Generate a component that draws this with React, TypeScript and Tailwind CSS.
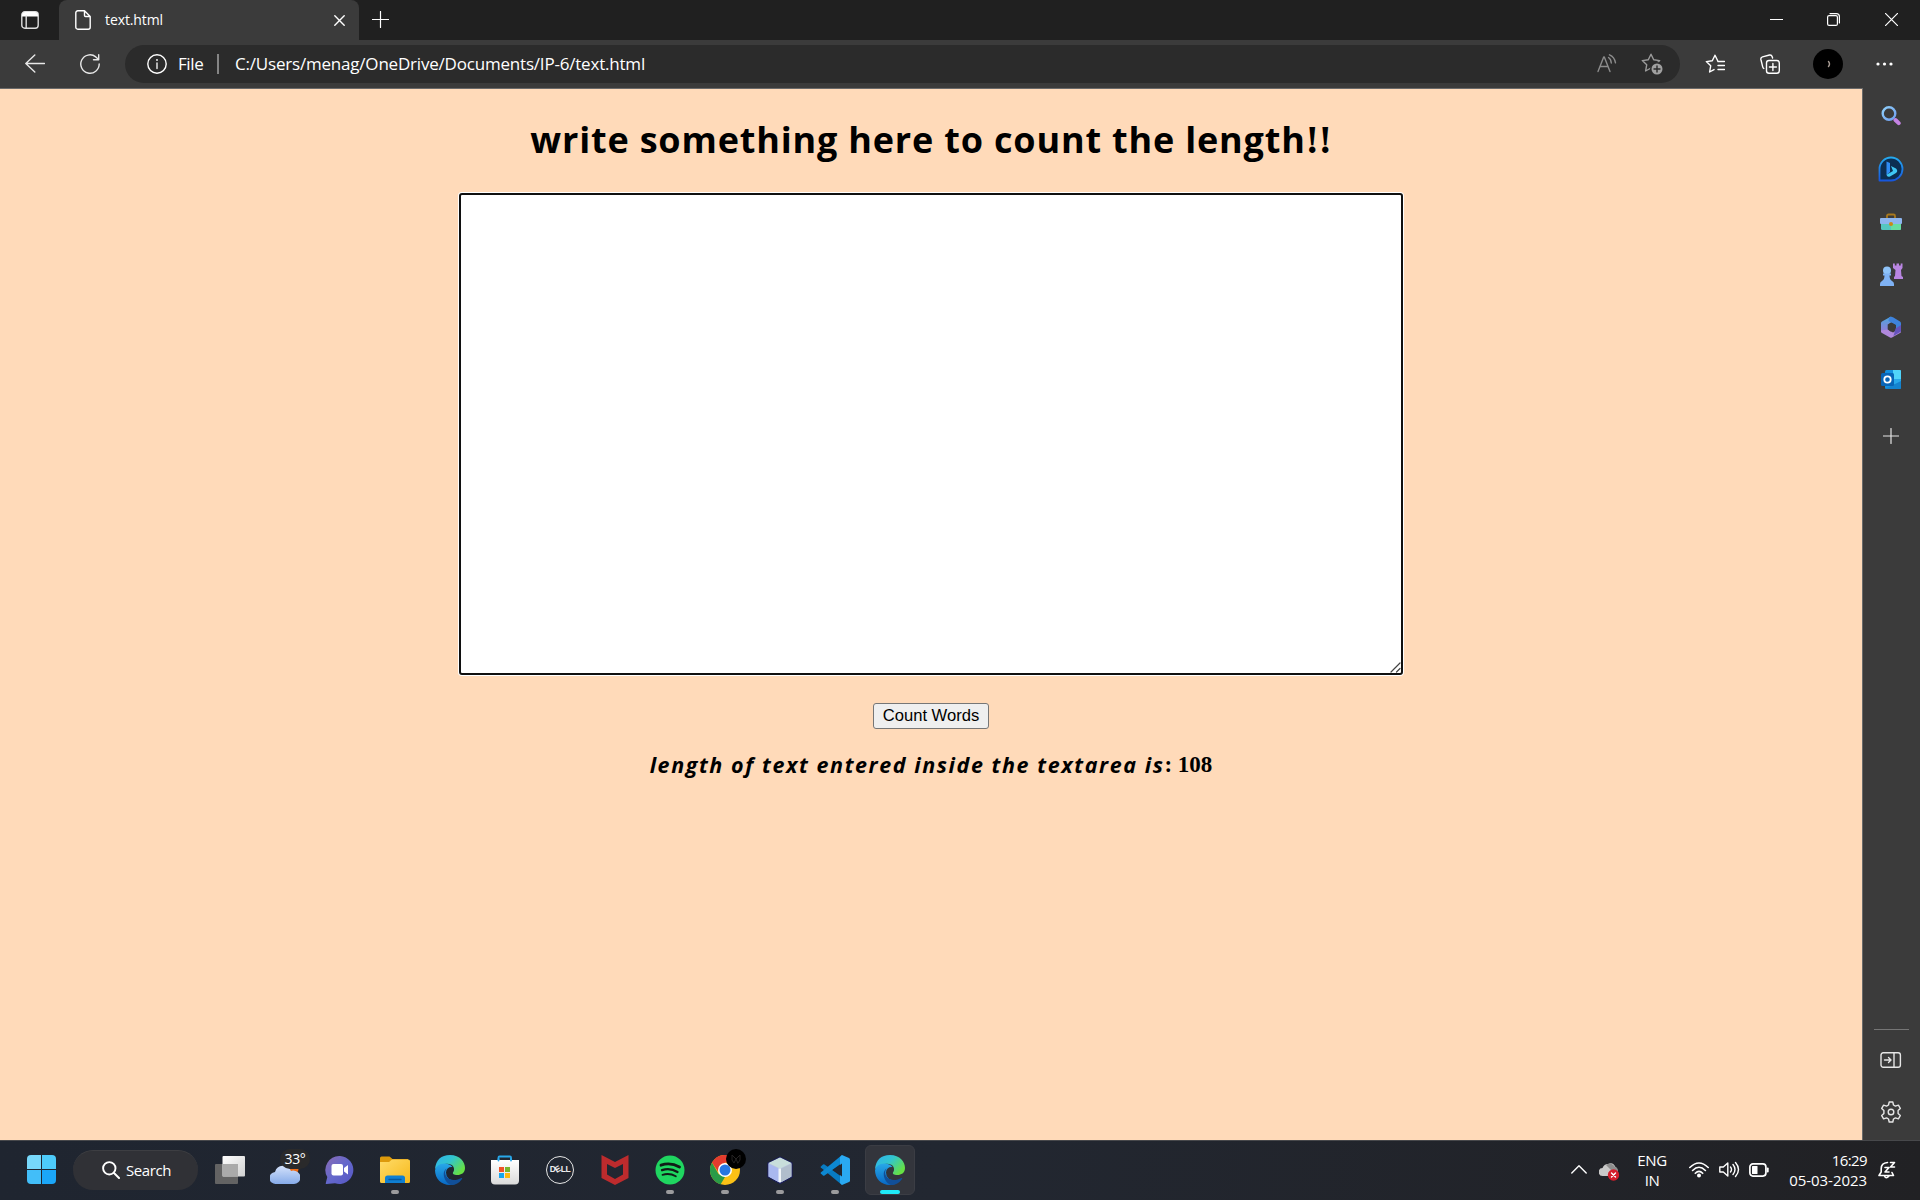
import React from "react";

const ui = "font-['Open_Sans','Noto_Sans',sans-serif]";

type IconProps = { children: React.ReactNode; w?: number; h?: number; className?: string };

function Svg({ children, w = 20, h = 20, className = "" }: IconProps) {
  return (
    <svg
      width={w}
      height={h}
      viewBox={`0 0 ${w} ${h}`}
      fill="none"
      stroke="currentColor"
      strokeWidth="1.4"
      strokeLinecap="round"
      strokeLinejoin="round"
      className={`block shrink-0 ${className}`}
    >
      {children}
    </svg>
  );
}

function TitleBar() {
  return (
    <div className="flex h-10 bg-[#202020] text-white">
      <div className="flex w-[59px] shrink-0 items-center rounded-br-lg pl-[21px]">
        <Svg w={18} h={18}>
          <rect x="0.8" y="0.8" width="16.4" height="16.4" rx="3" stroke="#ddd" />
          <path d="M1 4a3 3 0 0 1 3-3h10a3 3 0 0 1 3 3v1.5H1z" fill="#fff" stroke="none" />
          <path d="M5.2 5v12" stroke="#ddd" />
        </Svg>
      </div>
      <div className="flex w-[300px] shrink-0 items-center rounded-t-lg bg-[#3b3b3b] pl-4">
        <Svg w={16} h={20}>
          <path d="M3 .8h6.5L15.2 6.500V17.200a2 2 0 0 1-2 2H2.800a2 2 0 0 1-2-2V2.800a2 2 0 0 1 2-2zM9.500 1v4.500a1 1 0 0 0 1 1H15" />
        </Svg>
        <span className={`${ui} ml-[14px] w-[229px] text-[14px] leading-5 tracking-[-0.1px]`}>text.html</span>
        <Svg w={11} h={11} className="mt-px">
          <path d="M.8.8l9.400 9.400M10.200.8L.8 10.200" />
        </Svg>
      </div>
      <div className="flex flex-1 items-center pl-[13px]">
        <Svg w={17} h={17} className="-mt-px">
          <path d="M8.500 .5v16M.5 8.500h16" strokeWidth="1.200" />
        </Svg>
      </div>
      <div className="flex items-center pr-[22px]">
        <Svg w={13} h={13} className="mr-11 -mt-px">
          <path d="M0 6.500h13" strokeWidth="1" />
        </Svg>
        <Svg w={13} h={13} className="mr-[45px] -mt-px">
          <rect x=".6" y="2.600" width="9.800" height="9.800" rx="1.500" strokeWidth="1.200" />
          <path d="M3 .6h6.400a3 3 0 0 1 3 3V10" strokeWidth="1.200" />
        </Svg>
        <Svg w={13} h={13} className="-mt-px">
          <path d="M.4.4l12.200 12.200M12.600.4L.4 12.600" strokeWidth="1.200" />
        </Svg>
      </div>
    </div>
  );
}

const STAR = "M10 1.200l2.700 5.600 6 .8-4.400 4.200 1.100 6.200L10 15l-5.400 3 1.100-6.200L1.300 7.600l6-.8z";

function Toolbar() {
  return (
    <div className="flex h-12 items-center bg-[#3b3b3b] text-white">
      <Svg className="ml-[25px]">
        <path d="M19.500 9.500H.8M9.800 1L.8 9.500l9 8.500" stroke="#e8e8e8" />
      </Svg>
      <Svg className="ml-[35px]">
        <path d="M19.200 10A9.200 9.200 0 1 1 15.800 2.900L18.700 5.600M18.700.8v5h-5.200" stroke="#e8e8e8" />
      </Svg>
      <div className="ml-[25px] flex h-[38px] w-[1555px] items-center rounded-full bg-[#2b2b2b] pl-[22px]">
        <Svg>
          <circle cx="10" cy="10" r="9.200" />
          <path d="M10 9v5.500" strokeWidth="1.300" />
          <circle cx="10" cy="6" r=".9" fill="currentColor" stroke="none" />
        </Svg>
        <span className={`${ui} ml-[11px] w-[39px] text-[17px] leading-6 tracking-[-0.4px]`}>File</span>
        <div className="h-5 w-0.5 bg-[#858585]" />
        <span className={`${ui} ml-4 flex-1 text-[17px] leading-6 tracking-[-0.2px]`}>
          C:/Users/menag/OneDrive/Documents/IP-6/text.html
        </span>
        <Svg className="mr-6 text-[#8c8c8c]">
          <path d="M1 17.500L6.700 3h.6L13 17.500M3 12.500h8M11.500 3.500q2.500 1.500 2.800 5.500M12.500 .8q5 2 6 8" />
        </Svg>
        <Svg w={22} h={22} className="mr-[17px] text-[#9b9b9b]">
          <path d={STAR} />
          <circle cx="16" cy="16" r="7" fill="#2b2b2b" stroke="none" />
          <circle cx="16" cy="16" r="5.500" fill="#a0a0a0" stroke="none" />
          <path d="M16 13v6M13 16h6" stroke="#2b2b2b" />
        </Svg>
      </div>
      <Svg className="ml-[25px]">
        <path d="M12.800 7L10 1.200 7.300 6.800l-6 .8 4.400 4.200-1.100 6.200L9 15.600M12.800 7.500h6.700M13 11.500h6.500M13 15.500h6.500" />
      </Svg>
      <Svg className="ml-[35px]">
        <rect x="6.500" y="6.500" width="12.800" height="12.800" rx="2.500" />
        <path d="M12.900 9.500v7M9.400 13h7M3.800 14.500Q3 14 2.700 12.800L.9 5.500Q.5 3.500 2.500 2.900L9.500 1q2-.4 2.600 1.500l.5 1.500" />
      </Svg>
      <div className="ml-[33px] flex size-[30px] items-center justify-center rounded-full bg-black">
        <Svg w={6} h={8}>
          <path d="M3.500 1.500q2 2.500 0 5" stroke="#a89c94" />
        </Svg>
      </div>
      <Svg w={18} h={4} className="ml-[33px]">
        <g fill="#fff" stroke="none">
          <circle cx="2" cy="2" r="1.600" />
          <circle cx="8.500" cy="2" r="1.600" />
          <circle cx="15" cy="2" r="1.600" />
        </g>
      </Svg>
    </div>
  );
}

function Sidebar() {
  const cell = "flex h-[53px] w-full items-center justify-center";
  return (
    <div className="flex w-[58px] shrink-0 flex-col items-center border-l border-[#6a6a6a] bg-[#3b3b3b] pt-px pr-px text-[#e6e6e6]">
      <div className={cell}>
        <Svg>
          <defs>
            <linearGradient id="lens" x1="0" y1="0" x2="1" y2="1">
              <stop stopColor="#8fd0fa" />
              <stop offset="1" stopColor="#6f9df0" />
            </linearGradient>
          </defs>
          <circle cx="8" cy="7.500" r="6.300" stroke="url(#lens)" strokeWidth="2.400" />
          <path d="M14.500 14l3.200 3.200" stroke="#c583e4" strokeWidth="4" />
        </Svg>
      </div>
      <div className={cell}>
        <Svg w={26} h={26}>
          <defs>
            <linearGradient id="bing" x1="0" y1="0" x2="0" y2="1">
              <stop stopColor="#25a9ee" />
              <stop offset="1" stopColor="#1757dd" />
            </linearGradient>
          </defs>
          <path d="M1.500 24.500V13A11.500 11.500 0 1 1 13 24.500z" fill="#0c2f52" stroke="url(#bing)" strokeWidth="1.800" />
          <path d="M8.500 5.500l3.500 1.500v9l-3.500 3z" fill="#2f8cf4" stroke="none" />
          <path d="M13 10l5 2.500q2.500 2.500 0 4.500l-6 3.500q-3 .8-3.500-1.800l6.500-3.700z" fill="#3fc8f4" stroke="none" />
        </Svg>
      </div>
      <div className={cell}>
        <Svg w={22} h={18}>
          <path d="M7 5V3q0-1.500 1.500-1.500h5Q15 1.500 15 3v2" stroke="#a8781c" strokeWidth="1.800" />
          <path d="M1 9h20v6.500a1.500 1.500 0 0 1-1.500 1.500h-17A1.500 1.500 0 0 1 1 15.500z" fill="#54c7c0" stroke="none" />
          <path d="M11 10h10v5.500a1.500 1.500 0 0 1-1.500 1.500H11z" fill="#67dda2" stroke="none" />
          <rect x="0" y="5" width="22" height="6" rx="1" fill="#8db5ef" stroke="none" />
          <circle cx="11" cy="11" r="2" fill="#c98a17" stroke="none" />
        </Svg>
      </div>
      <div className={cell}>
        <Svg w={24} h={24}>
          <g stroke="none">
            <path d="M14 .5h1.800v2h1.700v-2h2.500v2h1.700v-2H23.500v4.500l-1.500 2 .5 6 1.500 1v2h-9v-2l1-1 .5-6-2.500-2z" fill="#b986e2" />
            <circle cx="8" cy="7.500" r="4" fill="#8fc3f8" />
            <path d="M4 10.500h8v2h-1.500q0 4 2.500 5.500 2 1 2 3V23H1v-2q0-2 2-3 2.500-1.500 2.500-5.500H4z" fill="#7fb2f4" />
          </g>
        </Svg>
      </div>
      <div className={`${cell} -mt-px`}>
        <Svg w={22} h={22}>
          <defs>
            <linearGradient id="officeLeft" x1="0" y1="0" x2="0" y2="1">
              <stop stopColor="#4aa8dc" />
              <stop offset="1" stopColor="#9a78d8" />
            </linearGradient>
          </defs>
          <g stroke="none">
            <path d="M11 .5L2 5.500Q1 6 1 7v8l4 2 4-2V8l5-3z" fill="url(#officeLeft)" />
            <path d="M9 1.200q2-1 4 0l7 4.300q1 .5 1 2V15l-5 1.500V9L8.500 5z" fill="#3e83dd" />
            <path d="M1 14.500l7-1 5 3 8-5v4q0 1-1 1.500l-8 4.500q-1 .5-2 0l-8-4.500q-1-.5-1-1.500z" fill="#b088dc" />
            <path d="M15.500 12.500L21 9v6.500l-7.500 4.500z" fill="#6553bc" />
            <path d="M11 6.500l4 2.300v4.500l-4 2.500-3.300-2.300V8.500z" fill="#3b3b3b" />
          </g>
        </Svg>
      </div>
      <div className={cell}>
        <Svg w={22} h={20}>
          <g stroke="none">
            <rect x="5" y="0" width="16" height="19" rx="1.500" fill="#1490df" />
            <path d="M13 0h7q1 0 1 1v8h-8z" fill="#50d4fa" />
            <path d="M12 9h9v8L12 13z" fill="#28a8ea" />
            <path d="M5 19l16-8v7q0 1-1.500 1z" fill="#1483cf" />
            <rect x="1" y="3" width="13" height="13" rx="1.500" fill="#0865b7" />
          </g>
          <circle cx="7.500" cy="9.500" r="3.200" stroke="#fff" strokeWidth="1.800" />
        </Svg>
      </div>
      <div className="flex h-[60px] w-full items-center justify-center">
        <Svg w={16} h={16}>
          <path d="M8 .5v15M.5 8h15" strokeWidth="1.200" />
        </Svg>
      </div>
      <div className="flex-1" />
      <div className="h-px w-[35px] bg-[#757575]" />
      <div className="mt-[3px] flex h-[53px] items-center">
        <Svg w={22} h={16}>
          <rect x="1" y=".8" width="19.400" height="14.400" rx="2.200" />
          <path d="M14 1v14M4.500 8h6M8.500 5.500L11 8l-2.500 2.500" />
        </Svg>
      </div>
      <div className="mb-[2px] flex h-[52px] items-center">
        <Svg w={22} h={22}>
          <circle cx="11" cy="11" r="2.800" />
          <path d="M9.200 1h3.600l.7 3 1.900 1.100 3-.9 1.900 3.200-2.200 2.200v2.800l2.200 2.200-1.900 3.200-3-.9-1.900 1.100-.7 3H9.200l-.7-3-1.900-1.100-3 .9-1.900-3.200 2.200-2.200V9.600L1.700 7.400l1.900-3.200 3 .9L8.500 4z" />
        </Svg>
      </div>
    </div>
  );
}

function Page() {
  return (
    <main className="flex w-[1862px] shrink-0 flex-col items-center bg-[#ffdab9] text-black">
      <h1 className="mt-[27px] flex h-12 items-center whitespace-nowrap">
        <span className="font-['Open_Sans',sans-serif] text-[36px] leading-[48px] font-bold tracking-[0.820px]">
          write something here to count the length
        </span>
        <span className="font-['Liberation_Serif',serif] text-[39px] leading-[48px] font-bold">!!</span>
      </h1>
      <div className="mt-[29px] flex h-[482px] w-[944px] items-end justify-end rounded-[3px] border-2 border-[#101010] bg-white shadow-[0_0_0_1px_#fff]">
        <Svg w={11} h={11}>
          <path d="M1 10L10 1M6.500 10L10 6.500" stroke="#444" strokeWidth="1.200" />
        </Svg>
      </div>
      <button className="mt-7 h-[26px] w-[116px] rounded-[3px] border border-[#767676] bg-[#efefef] font-['Liberation_Sans',sans-serif] text-[16.600px] leading-6 whitespace-nowrap">
        Count Words
      </button>
      <p className="mt-5 flex h-8 items-center whitespace-pre">
        <span className="font-['Open_Sans',sans-serif] text-[21.500px] leading-8 font-bold tracking-[1.580px] italic">
          length of text entered inside the textarea is
        </span>
        <span className="font-['Liberation_Serif',serif] text-[23px] leading-8 font-bold">: 108</span>
      </p>
    </main>
  );
}

function EdgeLogo({ id }: { id: string }) {
  return (
    <Svg w={30} h={30}>
      <defs>
        <linearGradient id={`${id}top`} x1="0" y1="0" x2="1" y2=".6">
          <stop stopColor="#2fb2ec" />
          <stop offset=".5" stopColor="#32c5cf" />
          <stop offset="1" stopColor="#66e044" />
        </linearGradient>
        <linearGradient id={`${id}side`} x1="0" y1="0" x2="0" y2="1">
          <stop stopColor="#28a8e8" />
          <stop offset="1" stopColor="#0868c4" />
        </linearGradient>
      </defs>
      <g stroke="none">
        <path d="M0 14Q1.500 0 15 0c10 0 15 7 15 13 0 5-4 7-7.500 7-4 0-5-1.300-4.500-2.500 2.500-3 .5-8-4-8.500Q7 8 0 14z" fill={`url(#${id}top)`} />
        <path d="M0 15Q2 8.500 9 8.500q6 0 8.500 3.500-6-.5-6.500 5.500 0 9 13 8-4 4.500-9 4.500C6 30 0 23.500 0 15z" fill={`url(#${id}side)`} />
        <path d="M11.500 13.500Q9 17 11 21c3 5 10 5 15.500 2q1.200-.3.500 1-4 6-11 6C9.500 28 6 17 11.500 13.500z" fill="#114f98" />
      </g>
    </Svg>
  );
}

function Slot({ children, dot, active }: { children: React.ReactNode; dot?: boolean; active?: boolean }) {
  return (
    <div
      className={`relative mx-[2.5px] flex h-[50px] w-[50px] shrink-0 items-center justify-center rounded-md ${
        active ? "border border-[#3b3d44] bg-[#33353c]" : ""
      }`}
    >
      {children}
      {dot && <div className="absolute bottom-px left-[21px] h-1 w-2 rounded-full bg-[#9b9b9d]" />}
      {active && <div className="absolute bottom-0 left-[14px] h-1 w-5 rounded-full bg-[#1feaf8]" />}
    </div>
  );
}

function Taskbar() {
  return (
    <div className="flex h-[60px] items-center border-t border-[#47484b] bg-linear-to-r from-[#1f2530] via-[#222731] to-[#212124] pb-[2px] text-white">
      <div className="ml-[27px] grid size-[29px] grid-cols-2 gap-px">
        <div className="rounded-tl-sm bg-[#77d8fb]" />
        <div className="rounded-tr-sm bg-[#4dcbfa]" />
        <div className="rounded-bl-sm bg-[#42bef9]" />
        <div className="rounded-br-sm bg-[#1ba6f8]" />
      </div>
      <div className="ml-[17px] flex h-10 w-[125px] items-center rounded-full border-t border-[#3d3e42] bg-[#303136] pl-[29px]">
        <Svg w={18} h={18}>
          <circle cx="7.300" cy="7.300" r="6.200" strokeWidth="1.900" />
          <path d="M12 12l5 5" strokeWidth="2" />
        </Svg>
        <span className={`${ui} ml-[6px] text-[15px] leading-5 tracking-[-0.4px]`}>Search</span>
      </div>
      <div className="ml-[4.500px] flex">
        <Slot>
          <Svg w={30} h={28}>
            <defs>
              <linearGradient id="pane" x1="0" y1="0" x2="1" y2="1">
                <stop stopColor="#fff" />
                <stop offset="1" stopColor="#d0d0d0" />
              </linearGradient>
            </defs>
            <g stroke="none">
              <rect x="0" y="8" width="23" height="20" rx="1" fill="#636363" />
              <rect x="7.500" y="0" width="22.500" height="20.500" rx="1" fill="url(#pane)" />
              <path d="M7.500 8H23v12.500H7.500z" fill="#aaa" />
            </g>
          </Svg>
        </Slot>
        <Slot>
          <Svg w={30} h={30}>
            <defs>
              <linearGradient id="cloud" x1="0" y1="0" x2="0" y2="1">
                <stop stopColor="#d3e1fb" />
                <stop offset="1" stopColor="#86abe9" />
              </linearGradient>
            </defs>
            <g stroke="none">
              <circle cx="23" cy="14" r="5.500" fill="#ee6b16" />
              <path d="M6 29a6 6 0 0 1-1-12 8.500 8.500 0 0 1 16-1q2-1 4.500 0a6.600 6.600 0 0 1-1.500 13z" fill="url(#cloud)" />
            </g>
          </Svg>
          <span className={`${ui} absolute top-[4px] left-[20px] flex h-5 w-[30px] items-center justify-center rounded-full bg-[#2a2a2b] text-[14px] tracking-[-0.300px]`}>
            33°
          </span>
        </Slot>
        <Slot>
          <Svg w={30} h={30}>
            <defs>
              <linearGradient id="chat" x1="0" y1="0" x2="1" y2="1">
                <stop stopColor="#8a6bb4" />
                <stop offset=".5" stopColor="#6468cc" />
                <stop offset="1" stopColor="#5556c4" />
              </linearGradient>
            </defs>
            <g stroke="none">
              <path d="M15 1a14 14 0 1 1-5 27.300L1.500 29q-1 0-.7-1l1.500-6A14 14 0 0 1 15 1z" fill="url(#chat)" />
              <rect x="6.500" y="9" width="11.500" height="11.500" rx="2" fill="#fff" />
              <path d="M19 13l4-3v9.500l-4-3z" fill="#fff" />
            </g>
          </Svg>
        </Slot>
        <Slot dot>
          <Svg w={30} h={28}>
            <defs>
              <linearGradient id="folder" x1="0" y1="0" x2="1" y2="1">
                <stop stopColor="#ffdb68" />
                <stop offset="1" stopColor="#f6b91b" />
              </linearGradient>
            </defs>
            <g stroke="none">
              <path d="M0 2q0-1.500 1.500-1.500h8L12.500 3H28v5H0z" fill="#dd9a0b" />
              <path d="M0 6h9l3-2.500h16.500Q30 3.500 30 5v20.500q0 1.500-1.500 1.500h-27Q0 27 0 25.500z" fill="url(#folder)" />
              <path d="M5 27v-5q0-2.500 2.500-2.500h15Q25 19.500 25 22v5z" fill="#0f7fd2" />
            </g>
            <path d="M9 23.500h12" stroke="#07589e" />
          </Svg>
        </Slot>
        <Slot>
          <EdgeLogo id="e1" />
        </Slot>
        <Slot>
          <Svg w={30} h={30}>
            <defs>
              <linearGradient id="bag" x1="0" y1="0" x2="0" y2="1">
                <stop stopColor="#fff" />
                <stop offset="1" stopColor="#dadada" />
              </linearGradient>
            </defs>
            <path d="M8.500 6V2.500q0-1 1-1h10.500q1 0 1 1V6" stroke="#28a8ea" strokeWidth="1.800" />
            <g stroke="none">
              <path d="M1 5h28v20.500q0 4-4 4H5q-4 0-4-4z" fill="url(#bag)" />
              <rect x="9" y="12" width="5" height="5" fill="#ef5328" />
              <rect x="15" y="12" width="5" height="5" fill="#78b52d" />
              <rect x="9" y="18" width="5" height="5" fill="#16a6ee" />
              <rect x="15" y="18" width="5" height="5" fill="#fdb910" />
            </g>
            <path d="M8.500 5.500V4M21 5.500V4" stroke="#28a8ea" strokeWidth="1.800" />
          </Svg>
        </Slot>
        <Slot>
          <div className="flex size-7 items-center justify-center rounded-full border-[1.500px] border-[#e6e6e6] font-['Liberation_Sans',sans-serif] text-[8.500px] leading-none font-bold tracking-[-0.400px] text-[#ececec]">
            D<span className="-rotate-[30deg]">E</span>LL
          </div>
        </Slot>
        <Slot>
          <Svg w={28} h={30}>
            <path d="M.5 0L14 7 27.500 0v23L14 30 .5 23zM6 9v10.500L14 24l8-4.500V9l-8 4z" fill="#bd2b2d" fillRule="evenodd" stroke="none" />
          </Svg>
        </Slot>
        <Slot dot>
          <Svg w={30} h={30}>
            <circle cx="15" cy="15" r="14.500" fill="#1fd660" stroke="none" />
            <g stroke="#111b17">
              <path d="M6 10.200Q15.500 7 24.500 12" strokeWidth="2.800" />
              <path d="M7 15.200Q15 12.500 22.500 17" strokeWidth="2.300" />
              <path d="M7.500 19.800Q14.500 17.600 20.800 21.300" strokeWidth="1.900" />
            </g>
          </Svg>
        </Slot>
        <Slot dot>
          <Svg w={30} h={30}>
            <g stroke="none">
              <circle cx="15" cy="15" r="15" fill="#fbc116" />
              <path d="M2 7.500L8.500 19 15 22l-4.500 7.400A15 15 0 0 1 2 7.500z" fill="#2a9b47" />
              <path d="M2 7.500A15 15 0 0 1 28 7.500H15l-7 9z" fill="#e33b2e" />
              <circle cx="15" cy="15" r="7" fill="#fff" />
              <circle cx="15" cy="15" r="5.500" fill="#2877e2" />
            </g>
          </Svg>
          <div className="absolute top-[4px] left-[26px] flex size-5 items-center justify-center rounded-full bg-black text-[#252323]">
            <Svg w={12} h={10}>
              <path d="M6 5L2 1v5l2 3 2-4 4-4v5L8 9z" strokeWidth="1" />
            </Svg>
          </div>
        </Slot>
        <Slot dot>
          <Svg w={28} h={28}>
            <g stroke="#191c58" strokeWidth="1.200">
              <path d="M14 1l12 6v14l-12 6.500L2 21V7z" fill="#b9c5df" />
            </g>
            <g stroke="none">
              <path d="M14 1.500L25.500 7 14 12.500 2.500 7z" fill="#c8dedb" />
              <path d="M2.500 7.500L13.500 13v13.500l-11-6z" fill="#a9b8ef" />
              <path d="M14.500 13l11-5.500v13l-11 6z" fill="#b0bdcc" />
              <path d="M12.500 12.500h2.500v13.500h-2.500z" fill="#eff4f8" />
            </g>
          </Svg>
        </Slot>
        <Slot dot>
          <Svg w={30} h={30}>
            <g stroke="none">
              <path d="M.8 11.500L3 9.500q.7-.5 1.500 0L22 22v8L.8 12.500q-.5-.5 0-1z" fill="#087bc2" />
              <path d="M22 0v8L4.500 20.500q-.8.500-1.500 0L.8 18.500q-.5-.5 0-1z" fill="#0d88d2" />
              <path d="M22 0l7 3q1 .5 1 1.500v21q0 1-1 1.500l-7 3-2-2V2z" fill="#2aaaf2" />
              <path d="M22 8.500v13L13 15z" fill="#222731" />
            </g>
          </Svg>
        </Slot>
        <Slot active>
          <EdgeLogo id="e2" />
        </Slot>
      </div>
      <div className={`${ui} ml-auto flex items-center`}>
        <Svg w={16} h={9}>
          <path d="M.8 8L8 .8 15.200 8" />
        </Svg>
        <Svg w={21} h={20} className="ml-3 mt-1">
          <g stroke="none">
            <path d="M4 14a4 4 0 0 1-.5-8Q5 2 9 2q5-2.500 7.500 3 2.500 1 2 5L16 14z" fill="#c9c9c9" />
            <path d="M7 3q5-4 9 2 3 .5 3 5l-3 2z" fill="#8d8d8d" />
            <circle cx="14.500" cy="13" r="5.700" fill="#d51e2b" />
          </g>
          <path d="M12.500 11l4 4M16.500 11l-4 4" stroke="#fff" />
        </Svg>
        <div className="ml-4 w-8 text-center text-[15px] leading-5 tracking-[-0.4px]">
          ENG
          <br />
          IN
        </div>
        <Svg w={20} h={16} className="ml-[21px]">
          <path d="M.8 5.500Q10-3.500 19.200 5.500M3.600 8.500Q10 2 16.400 8.500M6.300 11.300Q10 7.500 13.700 11.300" strokeWidth="1.600" />
          <circle cx="10" cy="13.500" r="2" fill="#fff" stroke="none" />
        </Svg>
        <Svg w={21} h={17} className="ml-[10px]">
          <path d="M.8 6v5h3.500l4.500 4V2L4.300 6zM11.500 6q2 2.500 0 5M14 3.500q4 5 0 10M16.500 1.500q6 7 0 14" />
        </Svg>
        <Svg w={20} h={14} className="ml-[9px]">
          <rect x=".9" y=".9" width="16" height="12.200" rx="3" strokeWidth="1.700" />
          <rect x="3" y="3" width="5.500" height="8" rx=".5" fill="#fff" stroke="none" />
          <path d="M18.700 5.500v3" strokeWidth="2" />
        </Svg>
        <div className="ml-4 w-[82px] text-right text-[15px] leading-5 tracking-[-0.05px] whitespace-nowrap">
          <span className="tracking-[-0.6px]">16:29</span>
          <br />
          05-03-2023
        </div>
        <Svg w={18} h={18} className="ml-[11px] mr-6">
          <path d="M9.500 1.500Q3 2 3.200 8v3L1 14.500h14.500L14 11.500M6.500 15q1.500 3.500 4.500 0" strokeWidth="1.600" />
          <path d="M12.500 1.500h4L12.500 6h4M7 6.500h4L7 11h4" strokeWidth="1.600" />
        </Svg>
      </div>
    </div>
  );
}

export default function App() {
  return (
    <div className="flex h-[1200px] w-[1920px] flex-col overflow-hidden bg-[#3b3b3b]">
      <TitleBar />
      <Toolbar />
      <div className="flex flex-1">
        <div className="flex border-t border-[#6a6a6a]">
          <Page />
        </div>
        <Sidebar />
      </div>
      <Taskbar />
    </div>
  );
}
